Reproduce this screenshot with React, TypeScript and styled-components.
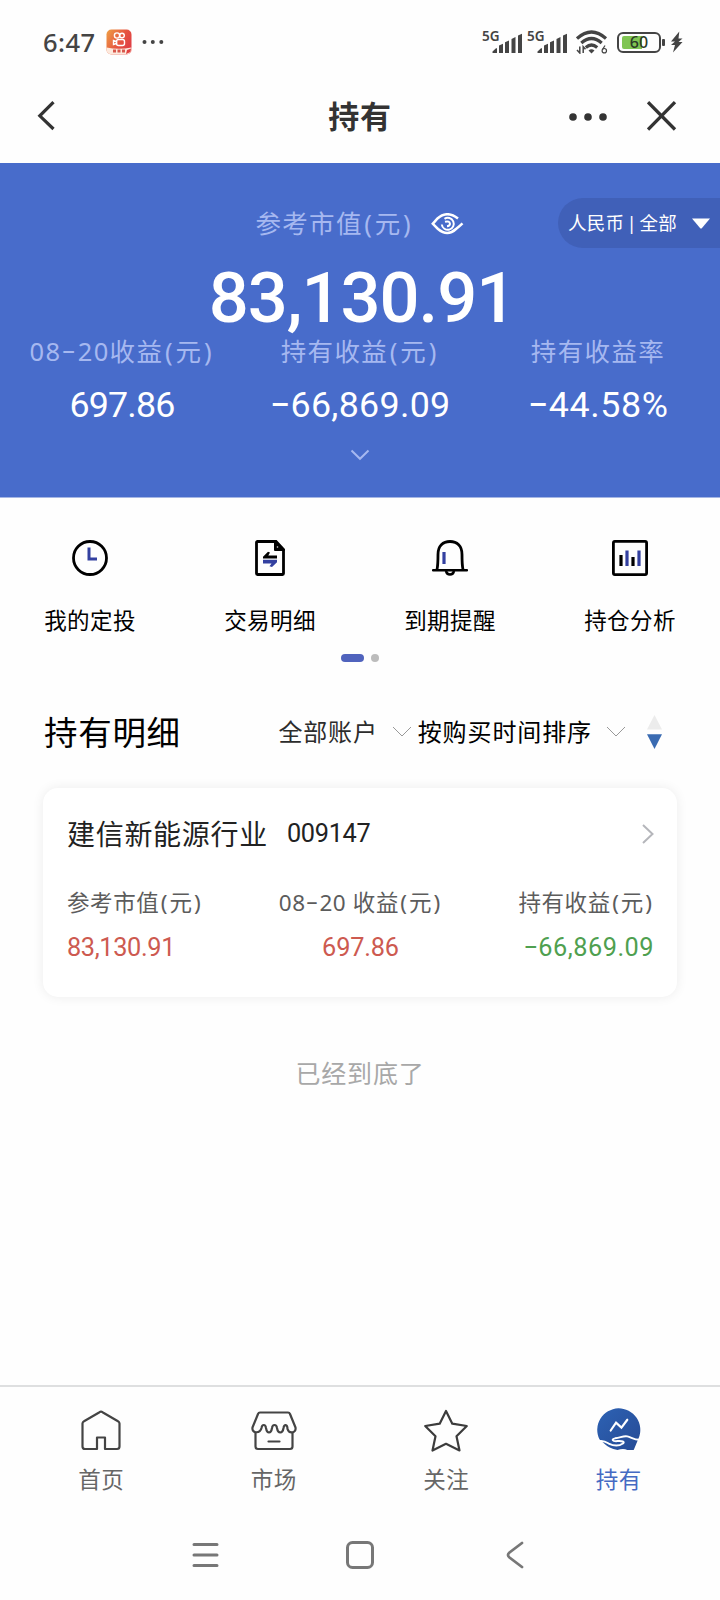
import React from "react";
import styled, { createGlobalStyle } from "styled-components";

const GlobalStyle = createGlobalStyle`
  * { box-sizing: border-box; }
  body {
    margin: 0;
    background: #fefefe;
    font-family: "Noto Sans", "Noto Sans CJK SC", sans-serif;
    color: #000;
  }
  svg { display: block; flex: none; }
`;

const Screen = styled.div`
  width: 720px;
  height: 1600px;
  display: flex;
  flex-direction: column;
  overflow: hidden;
  background: #fefefe;
`;

const Text = styled.span<{ $size: number; $color?: string; $gap?: number; $weight?: number; $line?: number }>`
  display: block;
  white-space: pre;
  font-size: ${(p) => p.$size}px;
  font-weight: ${(p) => p.$weight ?? 400};
  letter-spacing: ${(p) => p.$gap ?? 0}px;
  color: ${(p) => p.$color ?? "#000"};
  height: ${(p) => p.$line ?? 36}px;
  line-height: ${(p) => p.$line ?? 36}px;
`;

const Figure = styled(Text)`
  padding-top: 0.046em;
  font-family: Roboto, sans-serif;
`;

const Dash = styled.span`
  display: inline-block;
  margin: 0 0.06em;
  font-family: Inter, sans-serif;
  line-height: 1;
  transform: translateY(-0.03em) scaleX(1.3);
`;

const Paren = styled.span`
  padding: 0 0.06em;
`;

function mixed(text: string) {
  return text.split(/([-()])/).map((part, i) => {
    if (part === "-") return <Dash key={i}>-</Dash>;
    if (part === "(" || part === ")") return <Paren key={i}>{part}</Paren>;
    return part;
  });
}

/* ---------- status bar ---------- */

const StatusBar = styled.header`
  height: 72px;
  padding: 12px 37px 0 43px;
  display: flex;
  justify-content: space-between;
  align-items: center;
`;

const StatusGroup = styled.div`
  display: flex;
  align-items: center;
`;

const AppIcon = styled.svg`
  margin: 0 10px 0 10px;
`;

const SignalBox = styled.div`
  display: flex;
  align-items: flex-start;
  height: 24px;
  margin-right: 4px;
`;

const SignalName = styled(Text)`
  width: 18px;
`;

const SignalBars = styled.svg`
  margin: 3px 0 0 -8px;
`;

const WifiIcon = styled.svg`
  margin: 0 9px 0 4px;
`;

const Battery = styled.div`
  position: relative;
  width: 44px;
  height: 21px;
  border: 2px solid #444;
  border-radius: 6px;
  display: flex;
  align-items: center;
  justify-content: center;
`;

const BatteryLevel = styled.div`
  position: absolute;
  left: 3px;
  top: 2px;
  bottom: 2px;
  width: 20px;
  border-radius: 2px 0 0 2px;
  background: #80c553;
`;

const BatteryText = styled(Text)`
  position: relative;
`;

const BatteryNub = styled.div`
  width: 3px;
  height: 7px;
  margin: 0 5px 0 1px;
  border-radius: 1px;
  background: #444;
`;

function Signal() {
  return (
    <SignalBox>
      <SignalName $size={13.5} $weight={600} $color="#444" $line={13}>5G</SignalName>
      <SignalBars width="31" height="21" viewBox="0 0 31 21" fill="#444">
        <path d="M0.500 20v-1.500l3.500-3.300h1V20zM7 20v-7.500l4-1.800V20zM13 20V9.300l4-1.800V20zM19.500 20V6l4-2v16zM26 20V2.500l4-1.800V20z" />
      </SignalBars>
    </SignalBox>
  );
}

/* ---------- title bar ---------- */

const TitleBar = styled.div`
  height: 91px;
  padding: 0 43px 3px 37px;
  display: grid;
  grid-template-columns: 1fr auto 1fr;
  align-items: center;
`;

const PageTitle = styled(Text)`
  padding-left: 6px;
`;

const TitleActions = styled.div`
  display: flex;
  justify-content: flex-end;
  align-items: center;
  gap: 40px;
`;

const MoreIcon = styled.svg`
  margin-top: 2px;
`;

/* ---------- summary ---------- */

const Summary = styled.section`
  position: relative;
  height: 335px;
  padding-top: 42px;
  display: flex;
  flex-direction: column;
  align-items: center;
  background: #486ccb;
  border-bottom: 1px solid #a5b6e4;
`;

const SummaryHead = styled.div`
  display: flex;
  align-items: center;
  gap: 18px;
`;

const EyeIcon = styled.svg`
  margin-top: 2px;
`;

const CurrencyPill = styled.div`
  position: absolute;
  right: 0;
  top: 35px;
  width: 162px;
  height: 50px;
  padding: 0 10px 0 10px;
  display: flex;
  align-items: center;
  justify-content: space-between;
  border-radius: 25px 0 0 25px;
  background: #4060b8;
`;

const PillText = styled(Text)`
  word-spacing: -2.5px;
`;

const TotalValue = styled(Figure)`
  margin-top: 16px;
  padding-left: 4px;
`;

const Stats = styled.div`
  display: grid;
  grid-template-columns: repeat(3, 238px);
  justify-items: center;
  margin: 0 0 28px;
`;

const StatCell = styled.div`
  display: flex;
  flex-direction: column;
  align-items: center;
  gap: 16px;
`;

const stats = [
  { label: "08-20收益(元)", value: "697.86", gap: -0.8 },
  { label: "持有收益(元)", value: "-66,869.09", gap: 0.3 },
  { label: "持有收益率", value: "-44.58%", gap: 0.6 },
];

/* ---------- shortcuts ---------- */

const Shortcuts = styled.nav`
  display: grid;
  grid-template-columns: repeat(4, 1fr);
  padding-top: 42px;
`;

const Shortcut = styled.div`
  display: flex;
  flex-direction: column;
  align-items: center;
  gap: 27px;
`;

const Pager = styled.div`
  height: 8px;
  margin: 15px 1px 0 0;
  display: flex;
  justify-content: center;
  gap: 7px;
`;

const PagerDot = styled.i<{ $active?: boolean }>`
  width: ${(p) => (p.$active ? 23 : 8)}px;
  height: 8px;
  border-radius: 4px;
  background: ${(p) => (p.$active ? "#5063bd" : "#bcbcbc")};
`;

const shortcuts = [
  {
    label: "我的定投",
    icon: (
      <svg width="36" height="36" viewBox="0 0 36 36" fill="none">
        <circle cx="18" cy="18" r="16.500" stroke="#000" strokeWidth="2.800" />
        <path d="M17 7.500v11.500h8" stroke="#3340a0" strokeWidth="3" />
      </svg>
    ),
  },
  {
    label: "交易明细",
    icon: (
      <svg width="36" height="36" viewBox="0 0 36 36" fill="none">
        <path d="M5.500 1.500h18.500l7.500 8v24a1 1 0 0 1-1 1h-25a1 1 0 0 1-1-1v-31a1 1 0 0 1 1-1z" stroke="#000" strokeWidth="2.800" />
        <path d="M23 1v9h9z" fill="#000" stroke="#000" strokeWidth="2" strokeLinejoin="round" />
        <circle cx="25.500" cy="7" r=".8" fill="#ddd" />
        <path d="M11 18.500v-1.700l5-5 2 .6-1.700 3.200H25v2.900z" fill="#000" />
        <path d="M25 19.800v2.400l-5 4.800-2.500-.8 2-2.800H11v-3.600z" fill="#3340a0" />
      </svg>
    ),
  },
  {
    label: "到期提醒",
    icon: (
      <svg width="36" height="36" viewBox="0 0 36 36" fill="none" stroke="#000" strokeWidth="2.800">
        <path d="M5 29.500C6 25 6 21 6 14.500C6 6 11 1.500 18 1.500S30 6 30 14.500C30 21 30 25 31 29.500" />
        <path d="M1 30.200h34" strokeWidth="2.400" strokeLinecap="round" />
        <path d="M14 31c.5 2.500 2 3.500 4 3.500s3.500-1 4-3.500" strokeWidth="2.500" />
        <path d="M12 12v12" stroke="#3340a0" strokeWidth="3.200" />
      </svg>
    ),
  },
  {
    label: "持仓分析",
    icon: (
      <svg width="36" height="36" viewBox="0 0 36 36" fill="none">
        <rect x="1.400" y="1.400" width="33.200" height="33.200" rx="1.500" stroke="#000" strokeWidth="2.800" />
        <path d="M9 15v11M21 17v9" stroke="#000" strokeWidth="3.200" />
        <path d="M15 10.500v15.500M27 10.500v15.500" stroke="#3340a0" strokeWidth="3.200" />
      </svg>
    ),
  },
];

/* ---------- holdings ---------- */

const ListHead = styled.div`
  height: 40px;
  margin-top: 50px;
  padding: 0 58px 0 44px;
  display: flex;
  align-items: center;
`;

const Filters = styled.div`
  margin-left: auto;
  display: flex;
  align-items: center;
`;

const FilterArrow = styled.svg<{ $after: number }>`
  margin: 0 ${(p) => p.$after}px 0 14px;
`;

const Card = styled.article`
  height: 209px;
  margin: 36px 43px 0;
  padding: 27px 23px 0 24px;
  border-radius: 15px;
  background: #fff;
  box-shadow: 0 0 12px rgba(0, 0, 0, 0.075);
`;

const CardTitle = styled.div`
  height: 38px;
  display: flex;
  align-items: center;
  margin-bottom: 32px;

  svg { margin-left: auto; }
`;

const FundCode = styled(Figure)`
  margin: -2px 0 0 19px;
`;

const CardRow = styled.div`
  display: flex;
  justify-content: space-between;
`;

const CardCell = styled.div<{ $align: string }>`
  display: flex;
  flex-direction: column;
  align-items: ${(p) => p.$align};
  gap: 8px;
`;

const cells = [
  { label: "参考市值(元)", value: "83,130.91", color: "#cd5a50", align: "flex-start", gap: -0.35 },
  { label: "08-20 收益(元)", value: "697.86", color: "#cd5a50", align: "center", gap: -0.15 },
  { label: "持有收益(元)", value: "-66,869.09", color: "#4fa050", align: "flex-end", gap: 0.5 },
];

const EndNote = styled.div`
  margin-top: 58px;
  display: flex;
  justify-content: center;
`;

/* ---------- bottom navigation ---------- */

const TabBar = styled.nav`
  height: 125px;
  margin-top: auto;
  padding: 21px 15px 0 15px;
  display: grid;
  grid-template-columns: repeat(4, 1fr);
  border-top: 2px solid #dedfe0;
`;

const Tab = styled.div`
  display: flex;
  flex-direction: column;
  align-items: center;
  gap: 8px;
`;

const SystemBar = styled.footer`
  height: 90px;
  padding-left: 192px;
  display: flex;
  align-items: center;
`;

const HomeIcon = styled.svg`
  margin: 0 132px 0 127px;
`;

const tabs = [
  {
    label: "首页",
    color: "#666",
    icon: (
      <svg width="46" height="46" viewBox="0 0 46 46" fill="none" stroke="#444" strokeWidth="2.200" strokeLinejoin="round">
        <path d="M4.500 15.500Q4.500 14 6 13.200L21.500 4.200Q23 3.200 24.500 4.200L40 13.200Q41.500 14 41.500 15.500V38.500Q41.500 41 39 41H27V29.500H19V41H7Q4.500 41 4.500 38.500z" />
      </svg>
    ),
  },
  {
    label: "市场",
    color: "#666",
    icon: (
      <svg width="46" height="46" viewBox="0 0 46 46" fill="none" stroke="#444" strokeWidth="2.200" strokeLinecap="round" strokeLinejoin="round">
        <path d="M9 4.500H37Q38.500 4.500 39 6L44.500 19.500C45.500 25.500 38 26 36.500 21C36.500 16 33 16 32.500 20C31.500 26 27 26 26 20C25.500 16 21.500 16 21 20C20 26 16 26 15 20C14.500 16 11 16 10.500 20C9 26 .5 25.500 1.500 19.500L7 6Q7.500 4.500 9 4.500z" />
        <path d="M4.500 25V38.500Q4.500 41 7 41H39Q41.500 41 41.500 38.500V25M17.500 33.500H28.500" />
      </svg>
    ),
  },
  {
    label: "关注",
    color: "#666",
    icon: (
      <svg width="46" height="46" viewBox="0 0 46 46" fill="none" stroke="#3c3c3c" strokeWidth="2.200" strokeLinejoin="round">
        <path d="M23 3L29.300 15.700L43.800 18L33.500 28.300L36.500 42.500L23 35.800L9.500 42.500L12.500 28.300L2.200 18L16.700 15.700z" />
      </svg>
    ),
  },
  {
    label: "持有",
    color: "#456ac3",
    icon: (
      <svg width="46" height="46" viewBox="0 3 47 47" fill="none">
        <defs>
          <linearGradient id="holdFill" x1="0" y1="0" x2="1" y2="1">
            <stop offset="0" stopColor="#2d62b4" />
            <stop offset="1" stopColor="#264b95" />
          </linearGradient>
        </defs>
        <path d="M3.500 35A22 22 0 1 1 43.500 34L39.500 43.500L38.500 46H32Q28 44 22 46Q13 44 8 39z" fill="url(#holdFill)" />
        <path d="M15 26l5.500-8 5.500 5 6-8" stroke="#fff" strokeWidth="2.200" strokeLinecap="round" />
        <path d="M3 37c4-1 7 .5 10 2.300 5 2.500 10 3 14.500 0 2.500-2-1-2.800-5.500-2.500-5.500.5-6.500-2-2.500-2.800 5.500-.5 8-2.800 12.500-2 4 1 7 3.300 12 3.500" stroke="#fff" strokeWidth="2" strokeLinecap="round" strokeLinejoin="round" />
      </svg>
    ),
  },
];

export default function App() {
  return (
    <Screen>
      <GlobalStyle />

      <StatusBar>
        <StatusGroup>
          <Text $size={25.5} $weight={500} $color="#444" $line={30} $gap={0.5}>6:47</Text>
          <AppIcon width="26" height="26" viewBox="0 0 26 26" fill="none">
            <defs>
              <linearGradient id="appFill" x1="0" y1="0" x2="1" y2="0.600">
                <stop offset="0" stopColor="#eea045" />
                <stop offset="0.6" stopColor="#e65540" />
                <stop offset="1" stopColor="#df3f45" />
              </linearGradient>
            </defs>
            <rect x="0.500" y="0.500" width="25" height="25" rx="5" fill="url(#appFill)" />
            <path d="M0.500 18.500Q13 21 25.500 18.500V20.500A5 5 0 0 1 20.500 25.500H5.500A5 5 0 0 1 .5 20.500z" fill="#fde9dd" />
            <path d="M7 22h3M11.500 22h3M16 22h3" stroke="#d8584c" strokeWidth="3" />
            <path d="M20 25l1-4 4-1.500-.5 3.500z" fill="#e0413f" />
            <g stroke="#fff" strokeWidth="1.400">
              <circle cx="11" cy="6.500" r="2.600" />
              <circle cx="16" cy="6.500" r="2.300" />
              <rect x="10.500" y="10.500" width="8" height="6" rx="2" />
              <path d="M7.500 11.500v4l3-1v-2z" />
            </g>
          </AppIcon>
          <svg width="22" height="6" viewBox="0 0 22 6" fill="#444">
            <circle cx="2.500" cy="3" r="2" />
            <circle cx="10.800" cy="3" r="2" />
            <circle cx="19.300" cy="3" r="2" />
          </svg>
        </StatusGroup>
        <StatusGroup>
          <Signal />
          <Signal />
          <WifiIcon width="32" height="24" viewBox="0 0 32 24" fill="none" stroke="#444">
            <path d="M1 8.500Q15.500-4.500 30 8.500" strokeWidth="3.200" />
            <path d="M5.300 13Q15.500 4 25.700 13" strokeWidth="3.200" />
            <path d="M9.800 17.500Q15.500 12.500 21.200 17.500" strokeWidth="3.200" />
            <path d="M12.500 20.500Q15.500 17.800 18.500 20.500L15.500 23.500z" fill="#444" stroke="none" />
            <path d="M3.800 16.500v6.500L1 20M7.200 23v-6.300L9.500 19.300" strokeWidth="1.500" />
            <path d="M29 15.500L26.500 19.500" strokeWidth="1.200" />
            <circle cx="28.300" cy="20.700" r="2.200" strokeWidth="1.200" />
          </WifiIcon>
          <Battery>
            <BatteryLevel />
            <BatteryText $size={16} $weight={500} $color="#2c3a26" $line={17}>60</BatteryText>
          </Battery>
          <BatteryNub />
          <svg width="13" height="22" viewBox="0 0 13 22" fill="#444">
            <path d="M9.300 0.500L1 10.500H5L1 14H5L3 21.500L12.500 11H8.500L12.500 7.500H8.500z" />
          </svg>
        </StatusGroup>
      </StatusBar>

      <TitleBar>
        <svg width="18" height="32" viewBox="0 0 18 32" fill="none" stroke="#333" strokeWidth="3.200">
          <path d="M16.500 2.200L2.800 15.800L16.500 29" />
        </svg>
        <PageTitle $size={31} $weight={700} $color="#333" $gap={0.7} $line={42}>持有</PageTitle>
        <TitleActions>
          <MoreIcon width="38" height="8" viewBox="0 0 38 8" fill="#333">
            <circle cx="4" cy="4" r="3.800" />
            <circle cx="19" cy="4" r="3.800" />
            <circle cx="34" cy="4" r="3.800" />
          </MoreIcon>
          <svg width="30" height="32" viewBox="0 0 30 32" fill="none" stroke="#333" strokeWidth="3.300">
            <path d="M1 2.200L28 29.500M28 2.200L1 29.500" />
          </svg>
        </TitleActions>
      </TitleBar>

      <Summary>
        <SummaryHead>
          <Text $size={25.5} $gap={1.3} $color="#a6b8f0">{mixed("参考市值(元)")}</Text>
          <EyeIcon width="33" height="22" viewBox="0 0 33 22" fill="none" stroke="#fff" strokeWidth="2.500">
            <path d="M27 5.500Q16-3 6.500 5.500L1.800 10.800L7 16Q16.500 24 25 16Q28.500 13.200 31.500 10.300" />
            <path d="M10.800 11.500A6 6 0 1 0 13.500 5.800M14 8.800Q18.500 7.500 19 10.800Q18.800 13 16 13.200" strokeWidth="2" />
          </EyeIcon>
        </SummaryHead>
        <CurrencyPill>
          <PillText $size={18.5} $gap={0.2} $color="#fff">人民币 | 全部</PillText>
          <svg width="18" height="11" viewBox="0 0 18 11" fill="#fff">
            <path d="M0 .5h18L10 10q-1 1-2 0z" />
          </svg>
        </CurrencyPill>
        <TotalValue $size={70.5} $weight={500} $color="#fff" $line={76} $gap={-1.05}>83,130.91</TotalValue>
        <Stats>
          {stats.map((s) => (
            <StatCell key={s.label}>
              <Text $size={25.5} $gap={1.4} $color="#a6b8f0">{mixed(s.label)}</Text>
              <Figure $size={35.8} $gap={s.gap} $color="#fff">{mixed(s.value)}</Figure>
            </StatCell>
          ))}
        </Stats>
        <svg width="20" height="12" viewBox="0 0 20 12" fill="none" stroke="#a6b8f0" strokeWidth="2">
          <path d="M1.500 1.500L10 9.800L18.500 1.500" />
        </svg>
      </Summary>

      <Shortcuts>
        {shortcuts.map((s) => (
          <Shortcut key={s.label}>
            {s.icon}
            <Text $size={22.5} $gap={0.4}>{s.label}</Text>
          </Shortcut>
        ))}
      </Shortcuts>
      <Pager>
        <PagerDot $active />
        <PagerDot />
      </Pager>

      <ListHead>
        <Text $size={33.5} $gap={0.7} $line={40}>持有明细</Text>
        <Filters>
          <Text $size={24} $gap={0.8} $color="#2c2c2c">全部账户</Text>
          <FilterArrow $after={6} width="20" height="12" viewBox="0 0 20 12" fill="none" stroke="#999" strokeWidth="1">
            <path d="M1 1L10 10L19 1" />
          </FilterArrow>
          <Text $size={24} $gap={0.9}>按购买时间排序</Text>
          <FilterArrow $after={21} width="20" height="12" viewBox="0 0 20 12" fill="none" stroke="#999" strokeWidth="1">
            <path d="M1 1L10 10L19 1" />
          </FilterArrow>
          <svg width="15" height="34" viewBox="0 0 15 34">
            <path d="M7.500 0L15 14.500H0z" fill="#ececec" />
            <path d="M0 19.300H15L7.500 34z" fill="#3a6bb2" />
          </svg>
        </Filters>
      </ListHead>

      <Card>
        <CardTitle>
          <Text $size={28} $gap={0.7} $color="#222" $line={38}>建信新能源行业</Text>
          <FundCode $size={25.3} $gap={-0.3} $color="#222" $line={38}>009147</FundCode>
          <svg width="12" height="20" viewBox="0 0 12 20" fill="none" stroke="#b5b6bb" strokeWidth="2">
            <path d="M1 1L10.500 10L1 19" />
          </svg>
        </CardTitle>
        <CardRow>
          {cells.map((c) => (
            <CardCell key={c.label} $align={c.align}>
              <Text $size={22.5} $gap={0.6} $color="#5c5c5c">{mixed(c.label)}</Text>
              <Figure $size={25.3} $gap={c.gap} $color={c.color}>{mixed(c.value)}</Figure>
            </CardCell>
          ))}
        </CardRow>
      </Card>

      <EndNote>
        <Text $size={25} $gap={0.8} $color="#a8a8a8">已经到底了</Text>
      </EndNote>

      <TabBar>
        {tabs.map((t) => (
          <Tab key={t.label}>
            {t.icon}
            <Text $size={22.5} $gap={0.5} $color={t.color}>{t.label}</Text>
          </Tab>
        ))}
      </TabBar>

      <SystemBar>
        <svg width="27" height="26" viewBox="0 0 27 26" stroke="#777" strokeWidth="3" strokeLinecap="round">
          <path d="M2 2.500h23M2 13h23M2 23.500h23" />
        </svg>
        <HomeIcon width="28" height="28" viewBox="0 0 28 28" fill="none" stroke="#777" strokeWidth="3">
          <rect x="1.500" y="1.500" width="25" height="25" rx="5" />
        </HomeIcon>
        <svg width="18" height="28" viewBox="0 0 18 28" fill="none" stroke="#777" strokeWidth="2.800" strokeLinecap="round">
          <path d="M16 2L3.500 11.500Q.5 14 3.500 16.500L16 26" />
        </svg>
      </SystemBar>
    </Screen>
  );
}
